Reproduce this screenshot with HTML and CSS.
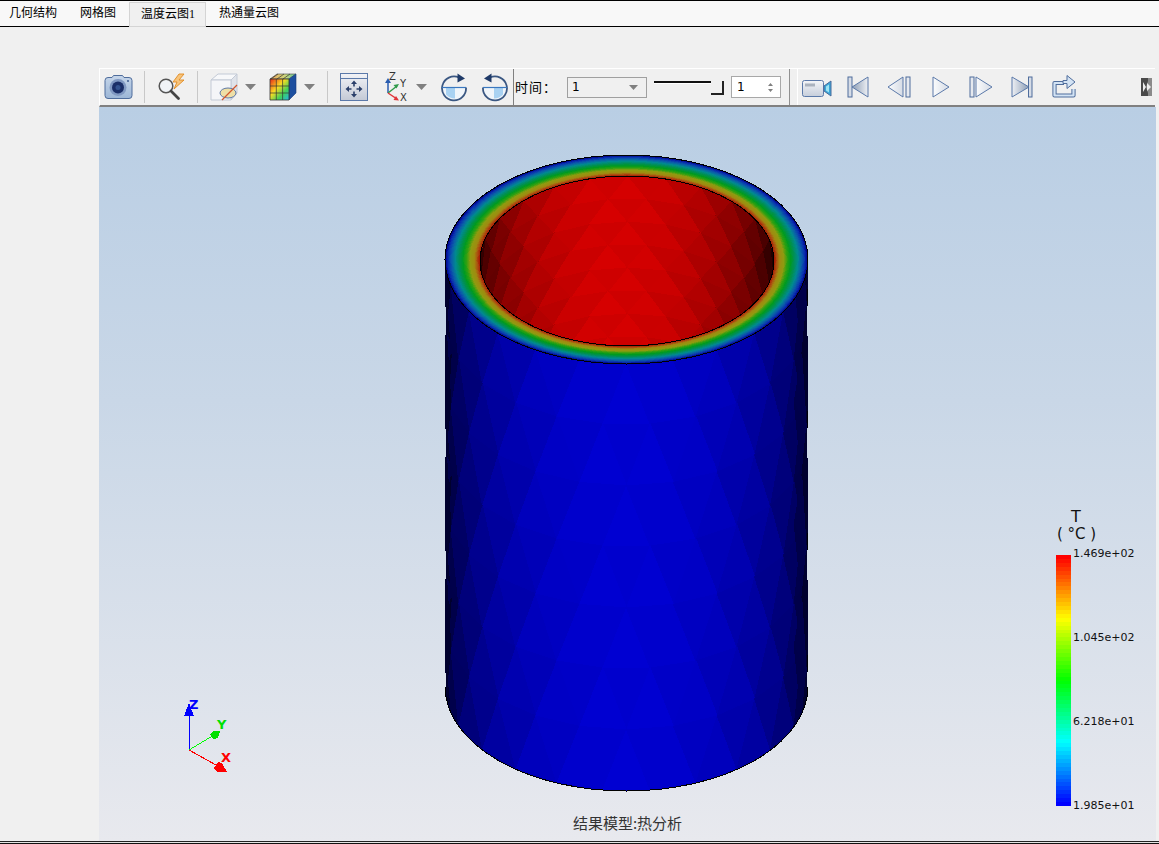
FILE: index.html
```html
<!DOCTYPE html>
<html lang="zh-CN">
<head>
<meta charset="utf-8">
<title>温度云图</title>
<link rel="stylesheet" href="styles.css">
</head>
<body>
<div class="app">
  <nav class="tabs">
    <div class="tab tab-first">几何结构</div>
    <div class="tab">网格图</div>
    <div class="tab tab-active">温度云图1</div>
    <div class="tab">热通量云图</div>
  </nav>
  <main class="workspace">
    <aside class="side"></aside>
    <section class="view">
      <div class="toolbar">
        <div class="tools tools-left">
          <svg class="ico w28 m-cam" viewBox="0 0 28 30">
            <defs>
              <linearGradient id="camBody" x1="0" y1="0" x2="0" y2="1"><stop offset="0" stop-color="#c6d6ea"/><stop offset="1" stop-color="#9cb6d6"/></linearGradient>
            </defs>
            <path d="M1 8.500q0-3 3-3h4l1.500-2h9l1.500 2h5q3 0 3 3v15q0 3-3 3h-21q-3 0-3-3z" fill="url(#camBody)" stroke="#4f6d9c"/>
            <circle cx="14" cy="15.500" r="8.500" fill="#8199c2"/>
            <circle cx="14" cy="15.500" r="6" fill="#1b2f68"/>
            <circle cx="14" cy="15.500" r="2.500" fill="#34538f"/>
            <circle cx="24" cy="9" r="1" fill="#3d5a8c"/>
          </svg>
          <span class="sep m12"></span>
          <svg class="ico w29 m12" viewBox="0 0 29 30">
            <path d="M22 2l-6 8h4l-3 7 10-9h-5l5-6z" fill="#f7c47c" stroke="#e08a20" stroke-width=".9"/>
            <circle cx="9" cy="14" r="6.800" fill="#f0f3f7" stroke="#555" stroke-width="1.500"/>
            <path d="M14 19l7.500 7.500" stroke="#444" stroke-width="2.800" stroke-linecap="round"/>
          </svg>
          <span class="sep m11"></span>
          <svg class="ico w28 m12" viewBox="0 0 28 30">
            <path d="M1 8l7-6h19l-6 6z" fill="#f7f8fa" stroke="#c3cad6"/>
            <path d="M21 8l6-6v19l-6 7z" fill="#dfe3ea" stroke="#c3cad6"/>
            <path d="M1 8h20v20h-20z" fill="#f4f5f8" stroke="#c3cad6"/>
            <ellipse cx="18" cy="21" rx="8" ry="5" fill="#eedfa6" stroke="#5d78a6"/>
            <path d="M27 13l-15 15" stroke="#d2562c" stroke-width="1.300"/>
          </svg>
          <svg class="drop m7" viewBox="0 0 11 6"><path d="M0 0h11l-5.500 6z"/></svg>
          <svg class="ico w28 m13" viewBox="0 0 28 30">
            <defs>
              <linearGradient id="cubeFront" x1="0" y1="0" x2="1" y2="1"><stop offset="0" stop-color="#e8281a"/><stop offset=".4" stop-color="#fadb22"/><stop offset=".7" stop-color="#3fd05a"/><stop offset="1" stop-color="#22b4ea"/></linearGradient>
              <linearGradient id="cubeTop" x1="0" y1="0" x2="1" y2="0"><stop offset="0" stop-color="#f2a45a"/><stop offset=".6" stop-color="#c9d77c"/><stop offset="1" stop-color="#5cc09a"/></linearGradient>
            </defs>
            <path d="M1 7l7-5h19l-7 5z" fill="url(#cubeTop)" stroke="#444" stroke-width=".6"/>
            <path d="M20 7l7-5v19l-7 7z" fill="#1d4f9f" stroke="#173a78" stroke-width=".6"/>
            <path d="M1 7h19v21h-19z" fill="url(#cubeFront)" stroke="#333" stroke-width=".8"/>
            <path d="M7.300 7v21M13.600 7v21M1 14h19M1 21h19M9 2l-7 5M15 2l-7 5M21 2l-7 5" stroke="#333" stroke-width=".7" fill="none"/>
          </svg>
          <svg class="drop m7" viewBox="0 0 11 6"><path d="M0 0h11l-5.500 6z"/></svg>
          <span class="sep m12"></span>
          <svg class="ico w28 m12" viewBox="0 0 28 30">
            <defs>
              <linearGradient id="fitBody" x1="0" y1="0" x2="0" y2="1"><stop offset="0" stop-color="#f2f3f7"/><stop offset="1" stop-color="#c3c9d5"/></linearGradient>
            </defs>
            <rect x=".5" y="1.500" width="27" height="27" fill="url(#fitBody)" stroke="#5b79a9"/>
            <path d="M1 6.500h26" stroke="#5b79a9"/>
            <path d="M14 8.500l-3 3.500h2.200v2.500h1.600v-2.500h2.200zM14 25.500l-3-3.500h2.200v-2.500h1.600v2.500h2.200zM5.500 17l3.500-3v2.200h2.500v1.600h-2.500v2.200zM22.500 17l-3.500-3v2.200h-2.500v1.600h2.500v2.200z" fill="#2b3f6a"/>
          </svg>
          <svg class="ico w27 m17" viewBox="0 0 27 30">
            <path d="M3 21v-12" stroke="#2a5db0" stroke-width="1.500"/><path d="M3 6l-3 5h6z" fill="#2a5db0"/>
            <path d="M3 21l9-7" stroke="#2f9a4a" stroke-width="1.500"/><path d="M14 12l-5.500 1 3 3.500z" fill="#2f9a4a"/>
            <path d="M3 21l9 6" stroke="#e0353a" stroke-width="1.500"/><path d="M14 28.500l-5.500-.5 2.500-4z" fill="#e0353a"/>
            <text class="axis-text" x="4" y="8">Z</text><text class="axis-text" x="15" y="15">Y</text><text class="axis-text" x="15" y="29">X</text>
          </svg>
          <svg class="drop m4" viewBox="0 0 11 6"><path d="M0 0h11l-5.500 6z"/></svg>
          <svg class="ico w26 m14" viewBox="0 0 26 30">
            <use href="#rotate"/>
          </svg>
          <svg class="ico w26 m15 mirror" viewBox="0 0 26 30">
            <use href="#rotate"/>
          </svg>
          <svg class="defs" viewBox="0 0 26 30">
            <symbol id="rotate" viewBox="0 0 26 30">
              <path d="M1 15.500a12 12 0 0 0 24 0z" fill="#f0f5fa"/>
              <path d="M5 15.500h9v11a12 12 0 0 1-9-4z" fill="#a9d2f2"/>
              <path d="M18 5.500A12 12 0 1 0 25 15.500" fill="none" stroke="#3a5782" stroke-width="1.800"/>
              <path d="M16.500 1.500l7.500 5-7.500 4z" fill="#1f3a68"/>
              <path d="M1 15.500h24" stroke="#3a78c0" stroke-width="1.200"/>
            </symbol>
          </svg>
        </div>
        <div class="time-panel">
          <span class="time-label">时间：</span>
          <div class="combo"><span>1</span><svg class="combo-arrow" viewBox="0 0 9 5"><path d="M0 0h9l-4.500 5z"/></svg></div>
          <div class="slider"><span class="slider-handle"></span></div>
          <div class="spin"><span>1</span>
            <svg class="spin-arrows" viewBox="0 0 7 11"><path d="M3.500 1l-2.500 3h5zM3.500 10l-2.500-3h5z"/></svg>
          </div>
        </div>
        <div class="tools tools-play">
          <svg class="ico w30" viewBox="0 0 30 30">
            <defs>
              <linearGradient id="vidBody" x1="0" y1="0" x2="0" y2="1"><stop offset="0" stop-color="#f4f5f8"/><stop offset="1" stop-color="#c6cedb"/></linearGradient>
              <linearGradient id="triFill" x1="0" y1="0" x2="1" y2="0"><stop offset="0" stop-color="#eef0f4"/><stop offset="1" stop-color="#8b9cb4"/></linearGradient>
              <linearGradient id="triFillR" x1="1" y1="0" x2="0" y2="0"><stop offset="0" stop-color="#eef0f4"/><stop offset="1" stop-color="#8b9cb4"/></linearGradient>
              <linearGradient id="triLight" x1="0" y1="0" x2="1" y2="0"><stop offset="0" stop-color="#fbfcfd"/><stop offset="1" stop-color="#d5dbe5"/></linearGradient>
            </defs>
            <rect x=".5" y="8.500" width="21" height="16" rx="2" fill="url(#vidBody)" stroke="#5b79a9"/>
            <rect x="3" y="11.500" width="10" height="3" fill="#aab2be"/>
            <path d="M22 14l7-5v15l-7-5z" fill="#3aa6d8" stroke="#4a6a9a"/>
            <path d="M24 14.500l3-2v8l-3-2z" fill="#9fe3f2"/>
          </svg>
          <svg class="ico w22 m15" viewBox="0 0 22 30">
            <rect x="1" y="5" width="4" height="20" fill="#d6dce6" stroke="#4f6d9c"/>
            <path d="M5 15l16-10v20z" fill="url(#triFillR)" stroke="#5b79a9"/>
          </svg>
          <svg class="ico w24 m18" viewBox="0 0 24 30">
            <path d="M1 15l15-10v20z" fill="url(#triLight)" stroke="#5b79a9"/>
            <rect x="19" y="5" width="4" height="20" fill="#e6e9ef" stroke="#4f6d9c"/>
          </svg>
          <svg class="ico w18 m21" viewBox="0 0 18 30">
            <path d="M1 5l16 10-16 10z" fill="url(#triLight)" stroke="#5b79a9"/>
          </svg>
          <svg class="ico w24 m19" viewBox="0 0 24 30">
            <rect x="1" y="5" width="4" height="20" fill="#e6e9ef" stroke="#4f6d9c"/>
            <path d="M7 5l16 10-16 10z" fill="url(#triLight)" stroke="#5b79a9"/>
          </svg>
          <svg class="ico w22 m18" viewBox="0 0 22 30">
            <path d="M1 5l17 10-17 10z" fill="url(#triFill)" stroke="#5b79a9"/>
            <rect x="17.500" y="5" width="3.500" height="20" fill="#d6dce6" stroke="#4f6d9c"/>
          </svg>
          <svg class="ico w24 m19" viewBox="0 0 24 30">
            <path d="M12 11h-9.500v12.500h19v-6.500" fill="none" stroke="#4f6d9c" stroke-width="4.200" stroke-linejoin="round"/>
            <path d="M12 11h-9.500v12.500h19v-6.500" fill="none" stroke="#d3e3f4" stroke-width="2.200" stroke-linejoin="round"/>
            <path d="M11 8.500h4v-5l8 6.500-8 6.500v-5h-4z" fill="#d3e3f4" stroke="#4f6d9c"/>
          </svg>
          <svg class="more" viewBox="0 0 11 18">
            <rect width="11" height="18" fill="#8a8a8a"/>
            <path d="M0 0h7v3l-2 6 2 6v3h-7z" fill="#4a4a4a"/>
            <path d="M2 4l3 5-3 5zM6 5l4 4-4 4z" fill="#eeeeee"/>
          </svg>
        </div>
      </div>
      <div class="viewport">
        <svg class="scene" viewBox="99 107 1057 734" shape-rendering="crispEdges">
          <defs>
            <clipPath id="bodyClip"><path d="M445 259.500V686.500A181.500 104.500 0 0 0 808 686.500V259.500Z"/></clipPath>
            <clipPath id="innerClip"><ellipse cx="627" cy="261" rx="147" ry="85"/></clipPath>
          </defs>
          <g id="outerWall" clip-path="url(#bodyClip)"></g>
          <path class="edge" d="M445 686.500A181.500 104.500 0 0 0 808 686.500"/>
          <g id="ring"></g>
          <ellipse class="edge" cx="626.500" cy="259.500" rx="181.500" ry="104.500"/>
          <g id="innerWall" clip-path="url(#innerClip)"></g>
          <ellipse class="edge" cx="627" cy="261" rx="147" ry="85"/>
          <g class="triad">
            <path d="M189 750V712" stroke="#0000ff"/>
            <path d="M189 703l5 13h-10z" fill="#0000ff"/>
            <path d="M189 750l25-15" stroke="#00ff00"/>
            <path d="M220 731l-2 7-5 1-3-5 4-3z" fill="#00e000"/>
            <path d="M189 750l27 15" stroke="#ff0000"/>
            <path d="M227 772l-10 0-3-4 4-6 4 1z" fill="#ff0000"/>
            <text class="triad-z" x="189" y="709">Z</text>
            <text class="triad-y" x="217" y="729">Y</text>
            <text class="triad-x" x="221" y="762">X</text>
          </g>
        </svg>
        <div class="legend">
          <div class="legend-title">T</div>
          <div class="legend-unit">( °C )</div>
          <div class="legend-body">
            <svg id="legendBar" class="legend-bar" viewBox="0 0 15 251" preserveAspectRatio="none" shape-rendering="crispEdges"></svg>
            <div class="legend-labels">
              <span>1.469e+02</span><span>1.045e+02</span><span>6.218e+01</span><span>1.985e+01</span>
            </div>
          </div>
        </div>
        <div class="caption">结果模型:热分析</div>
      </div>
    </section>
  </main>
  <footer class="bottom"></footer>
</div>
<script src="scene.js"></script>
</body>
</html>
```
FILE: styles.css
```css
* { box-sizing: border-box; }
html, body { margin: 0; padding: 0; }
body {
  width: 1159px;
  height: 844px;
  overflow: hidden;
  background: #f0f0f0;
  font-family: "Noto Sans CJK SC", sans-serif;
  color: #000;
}
.app { display: flex; flex-direction: column; height: 844px; }

.tabs {
  display: flex;
  height: 27px;
  flex: none;
  background: #f8f8f8;
  border-top: 1px solid #000;
  border-bottom: 1px solid #000;
  font: 12px/24px "Liberation Serif", "Noto Sans CJK SC", serif;
}
.tab { padding: 0 13px 0 12px; white-space: nowrap; color: #000; }
.tab-first { padding: 0 11px 0 9px; }
.tab-active {
  height: 25px;
  margin-top: 1px;
  margin-right: 1px;
  padding: 0 10px 0 11px;
  line-height: 23px;
  background: #f0f0f0;
  border: 1px solid #d4d4d4;
}

.workspace { display: flex; flex: 1; min-height: 0; }
.side { width: 99px; flex: none; }
.view {
  display: flex;
  flex-direction: column;
  width: 1057px;
  flex: none;
  padding-top: 41px;
}

.toolbar {
  display: flex;
  height: 39px;
  flex: none;
  width: 1056px;
  background: #f0f0f0;
  border-top: 1px solid #fff;
  border-bottom: 2px solid #808080;
  border-left: 1px solid #fff;
}
.tools { display: flex; align-items: center; flex: none; }
.tools-left { width: 413px; padding-left: 4px; }
.time-panel {
  position: relative;
  display: flex;
  align-items: center;
  width: 277px;
  flex: none;
  border-left: 1px solid #808080;
  border-right: 1px solid #909090;
  padding-left: 1px;
  font: 13px "Noto Sans CJK SC", sans-serif;
}
.tools-play {
  width: 366px;
  flex: none;
  margin-left: 7px;
  padding-left: 4px;
  border-left: 1px solid #fff;
  border-right: 2px solid #606060;
}

.ico { display: block; height: 30px; flex: none; overflow: visible; }
.w18 { width: 18px; } .w22 { width: 22px; } .w24 { width: 24px; } .w26 { width: 26px; }
.w27 { width: 27px; } .w28 { width: 28px; } .w29 { width: 29px; } .w30 { width: 30px; }
.m4 { margin-left: 4px; } .m7 { margin-left: 7px; } .m11 { margin-left: 11px; }
.m12 { margin-left: 12px; } .m13 { margin-left: 13px; } .m14 { margin-left: 14px; }
.m15 { margin-left: 15px; } .m17 { margin-left: 17px; } .m18 { margin-left: 18px; }
.m19 { margin-left: 19px; } .m21 { margin-left: 21px; }
.m-cam { margin-left: 0; }
.mirror { transform: scaleX(-1); }
.defs { width: 0; height: 0; position: absolute; }
.sep { display: block; width: 1px; height: 32px; background: #c8c8c8; flex: none; }
.drop { width: 11px; height: 6px; flex: none; fill: #808080; }
.axis-text { font: 10px "DejaVu Sans", sans-serif; fill: #333; }

.time-label { width: 52px; padding-bottom: 2px; letter-spacing: 1px; white-space: nowrap; flex: none; }
.combo {
  display: flex;
  align-items: center;
  justify-content: space-between;
  width: 80px;
  height: 21px;
  flex: none;
  padding: 0 8px 0 4px;
  border: 1px solid #a0a0a0;
  background: #f0f0f0;
  font: 12px "DejaVu Sans", sans-serif;
}
.combo-arrow { width: 9px; height: 5px; fill: #808080; }
.slider {
  position: relative;
  width: 70px;
  height: 16px;
  margin: 4px 0 0 7px;
  flex: none;
  border-top: 2px solid #111;
}
.slider::before { content: ""; position: absolute; left: 0; right: 13px; top: 0; height: 1px; background: #fff; }
.slider-handle {
  position: absolute;
  right: 0;
  top: -2px;
  width: 13px;
  height: 14px;
  background: #f0f0f0;
  border-right: 2px solid #222;
  border-bottom: 2px solid #222;
}
.spin {
  display: flex;
  align-items: center;
  justify-content: space-between;
  width: 50px;
  height: 22px;
  flex: none;
  margin-left: 7px;
  padding: 0 6px 0 5px;
  background: #fff;
  border: 1px solid #a8a8a8;
  font: 12px "DejaVu Sans", sans-serif;
}
.spin-arrows { width: 7px; height: 11px; fill: #808080; }
.more { width: 11px; height: 18px; margin-left: 65px; flex: none; filter: blur(.6px); }

.viewport {
  position: relative;
  flex: 1;
  min-height: 0;
  background: linear-gradient(180deg, #b9cee4 0%, #c9d7e7 40%, #e8e9ee 100%);
}
.scene { display: block; width: 1057px; height: 734px; }
.edge { fill: none; stroke: #000; stroke-width: 1; }
.triad path[stroke] { stroke-width: 1; fill: none; }
.triad text { font: bold 13px "DejaVu Sans", sans-serif; }
.triad-z { fill: #0000ff; }
.triad-y { fill: #00e000; }
.triad-x { fill: #ff0000; }

.legend { position: absolute; left: 957px; top: 402px; width: 90px; font-family: "DejaVu Sans", sans-serif; color: #111; }
.legend-title { width: 40px; text-align: center; font-size: 16px; line-height: 16px; }
.legend-unit { width: 41px; text-align: center; font-size: 15px; line-height: 18px; white-space: nowrap; }
.legend-body { display: flex; margin-top: 12px; }
.legend-bar { display: block; width: 15px; height: 251px; flex: none; }
.legend-labels {
  display: flex;
  flex-direction: column;
  justify-content: space-between;
  height: 266px;
  margin: -9px 0 0 2px;
  font-size: 11px;
  line-height: 14px;
  transform: translateY(1px);
}

.caption {
  position: absolute;
  left: 0;
  right: 0;
  bottom: 7px;
  text-align: center;
  font-size: 15px;
  line-height: 22px;
  color: #333;
}

.bottom { height: 3px; flex: none; background: #e4e4e4; border-top: 1px solid #222; border-bottom: 1px solid #111; }
```
FILE: scene.js
```js
(function () {
  var NS = 'http://www.w3.org/2000/svg';
  function add(parent, tag, attrs) {
    var el = document.createElementNS(NS, tag);
    for (var k in attrs) el.setAttribute(k, attrs[k]);
    parent.appendChild(el);
    return el;
  }
  function rgb(r, g, b) { return 'rgb(' + Math.round(r) + ',' + Math.round(g) + ',' + Math.round(b) + ')'; }

  /* Faceted cylinder wall, orthographic: staggered rows of triangles */
  function wall(group, o) {
    var d = 15, rows = o.rows;
    function pt(th, k) {
      var a = th * Math.PI / 180;
      return [o.cx + o.rx * Math.cos(a), o.cy - o.ry * Math.sin(a) + k * o.dh];
    }
    function shade(th, up) {
      var s = Math.abs(Math.sin((th + (o.tilt || 0)) * Math.PI / 180));
      var b = Math.pow(s, o.pow) * (up ? 1 : o.contrast);
      return o.color(b);
    }
    function tri(a, b, c, th, up) {
      var f = shade(th, up);
      add(group, 'polygon', { points: [a, b, c].map(function (p) { return p[0].toFixed(1) + ',' + p[1].toFixed(1); }).join(' '), fill: f, stroke: f, 'stroke-width': 1 });
    }
    for (var k = 0; k < rows; k++) {
      var off = k % 2 ? d / 2 : 0, off2 = k % 2 ? 0 : d / 2;
      for (var t = o.from; t <= o.to; t += d) {
        var t1 = t + off, t2 = t + off2;
        tri(pt(t1, k), pt(t1 + d, k), pt(t2 + (k % 2 ? d : 0), k + 1), t1 + d / 2, false);
        tri(pt(t2, k + 1), pt(t2 + d, k + 1), pt(t1 + (k % 2 ? 0 : d), k), t2 + d / 2, true);
      }
    }
  }

  wall(document.getElementById('outerWall'), {
    cx: 626.5, cy: 259.5, rx: 181.5, ry: 104.5, dh: 61, rows: 9,
    from: 165, to: 360, pow: 0.8, contrast: 0.975, tilt: 0,
    color: function (b) { return rgb(0, 0, 6 + 204 * b); }
  });
  wall(document.getElementById('innerWall'), {
    cx: 627, cy: 261, rx: 147, ry: 85, dh: 23, rows: 9,
    from: -15, to: 180, pow: 1.1, contrast: 0.96, tilt: -4,
    color: function (b) { return rgb(22 + 192 * b, 0, 0); }
  });

  /* Temperature band across the rim */
  var stops = [
    [0, 168, 12, 0], [0.1, 172, 80, 16], [0.18, 160, 138, 16], [0.3, 144, 154, 16],
    [0.4, 48, 160, 16], [0.5, 0, 154, 32], [0.6, 0, 144, 80], [0.72, 0, 138, 144],
    [0.82, 10, 96, 168], [0.92, 10, 48, 176], [1, 0, 0, 138]
  ];
  function bandColor(t) {
    for (var i = 1; i < stops.length; i++) {
      if (t <= stops[i][0]) {
        var a = stops[i - 1], b = stops[i], u = (t - a[0]) / (b[0] - a[0]);
        return rgb(a[1] + (b[1] - a[1]) * u, a[2] + (b[2] - a[2]) * u, a[3] + (b[3] - a[3]) * u);
      }
    }
    return rgb(0, 0, 138);
  }
  var ring = document.getElementById('ring');
  for (var i = 40; i >= 0; i--) {
    var t = i / 40;
    add(ring, 'ellipse', {
      cx: 627 - 0.5 * t,
      cy: 261 - 1.5 * t,
      rx: 147 + 34.5 * t,
      ry: 85 + 19.5 * t,
      fill: bandColor(t)
    });
  }

  /* Colour legend: stepped rainbow, red on top */
  var bar = document.getElementById('legendBar');
  var steps = 64;
  for (var s = 0; s < steps; s++) {
    var p = s / (steps - 1), r, g, b;
    if (p < 0.25) { r = 255; g = 255 * p / 0.25; b = 0; }
    else if (p < 0.5) { r = 255 * (0.5 - p) / 0.25; g = 255; b = 0; }
    else if (p < 0.75) { r = 0; g = 255; b = 255 * (p - 0.5) / 0.25; }
    else { r = 0; g = 255 * (1 - p) / 0.25; b = 255; }
    add(bar, 'rect', { x: 0, y: (s * 251 / steps).toFixed(2), width: 15, height: (251 / steps + 0.5).toFixed(2), fill: rgb(r, g, b) });
  }
})();
```
